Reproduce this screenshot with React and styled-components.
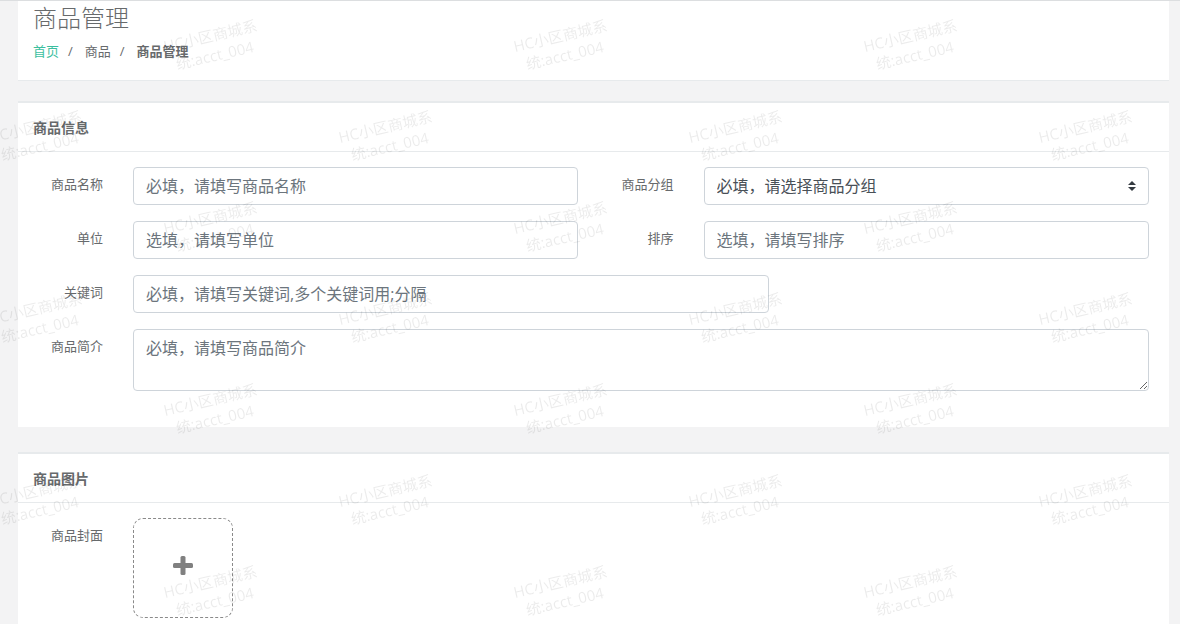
import React from 'react'
import styled, { createGlobalStyle } from 'styled-components'

const GlobalStyle = createGlobalStyle`
  html, body {
    margin: 0;
    padding: 0;
    overflow: hidden;
  }
  body {
    background: #f3f3f4;
    font-family: "Open Sans", "Noto Sans CJK SC", sans-serif;
    font-size: 13px;
    color: #676a6c;
  }
  * { box-sizing: border-box; }
`

const Page = styled.div`
  height: 100vh;
  overflow: hidden;
  border-top: 1px solid #dcdee0;
  padding: 0 11px 0 18px;
  position: relative;
`

const PageHeader = styled.div`
  background: #fff;
  height: 80px;
  border-bottom: 1px solid #e7eaec;
  padding: 4px 15px 0;
  h2 {
    margin: 0;
    font-size: 24px;
    font-weight: 300;
    line-height: 26px;
    color: #676a6c;
  }
`

const Breadcrumb = styled.ol`
  display: flex;
  list-style: none;
  margin: 10px 0 0;
  padding: 0;
  line-height: 20px;
  font-size: 13px;
  a {
    color: #3cbf9f;
    text-decoration: none;
  }
  strong {
    font-weight: 700;
    color: #676a6c;
  }
`

const Sep = styled.span`
  margin: 0 12px 0 9px;
  color: #676a6c;
`

const Ibox = styled.div`
  background: #fff;
  margin-top: ${p => p.$first ? '20px' : '25px'};
`

const IboxTitle = styled.div`
  border-top: 2px solid #e7eaec;
  border-bottom: 1px solid #e7eaec;
  padding: 15px 15px 13px;
  h5 {
    margin: 0;
    font-size: 14px;
    font-weight: 700;
    line-height: 20px;
    color: #676a6c;
  }
`

const IboxContent = styled.div`
  padding: 15px 20px 20px;
`

const Row = styled.div`
  display: flex;
  margin: 0 -15px 16px;
`

const Col = styled.div`
  flex: 0 0 ${p => (p.$span / 12) * 100}%;
  max-width: ${p => (p.$span / 12) * 100}%;
  padding: 0 15px;
  position: relative;
`

const Label = styled.label`
  display: block;
  text-align: right;
  padding-top: 7px;
  line-height: 20px;
  font-size: 13px;
  color: #676a6c;
  white-space: nowrap;
`

const fieldBase = `
  display: block;
  width: 100%;
  padding: 6px 12px;
  font-family: "Open Sans", "Noto Sans CJK SC", sans-serif;
  font-size: 16px;
  line-height: 24px;
  color: #495057;
  background: #fff;
  border: 1px solid #ced4da;
  border-radius: 4px;
  outline: none;
  &::placeholder { color: #6c757d; opacity: 1; }
`

const Input = styled.input`
  ${fieldBase}
  height: 38px;
`

const TextArea = styled.textarea`
  ${fieldBase}
  height: 62px;
  resize: vertical;
`

const Select = styled.select`
  ${fieldBase}
  height: 38px;
  appearance: none;
  padding-right: 32px;
`

const SelectArrow = styled.svg`
  position: absolute;
  right: 28px;
  top: 14px;
  width: 8px;
  height: 10px;
  pointer-events: none;
`

const Upload = styled.div`
  width: 100px;
  height: 100px;
  border: 1px dashed #8a8a8a;
  border-radius: 10px;
  display: flex;
  align-items: center;
  justify-content: center;
  cursor: pointer;
  svg { margin-bottom: 5px; }
`

const Watermarks = styled.div`
  position: fixed;
  inset: 0;
  pointer-events: none;
  z-index: 10;
  overflow: hidden;
`

const Mark = styled.div`
  position: absolute;
  width: max-content;
  text-align: center;
  font-size: 15px;
  line-height: 20px;
  color: rgba(0, 0, 0, 0.08);
  transform: rotate(-13deg);
  transform-origin: 0 16px;
  white-space: nowrap;
`

const marks = []
for (let r = 0; r < 7; r++) {
  const baseX = r % 2 === 0 ? 165 : -10
  const y = 52 + 91 * r
  for (let k = 0; k < 4; k++) {
    const x = baseX + 350 * k
    if (x < 1180) marks.push({ x, y })
  }
}

function Field({ label, span, children }) {
  return (
    <>
      <Col $span={1}><Label>{label}</Label></Col>
      <Col $span={span}>{children}</Col>
    </>
  )
}

export default function App() {
  return (
    <>
      <GlobalStyle />
      <Page>
        <PageHeader>
          <h2>商品管理</h2>
          <Breadcrumb>
            <li><a href="#">首页</a></li>
            <li><Sep>/</Sep>商品</li>
            <li><Sep>/</Sep><strong>商品管理</strong></li>
          </Breadcrumb>
        </PageHeader>

        <Ibox $first>
          <IboxTitle><h5>商品信息</h5></IboxTitle>
          <IboxContent>
            <Row>
              <Field label="商品名称" span={5}>
                <Input placeholder="必填，请填写商品名称" />
              </Field>
              <Field label="商品分组" span={5}>
                <Select defaultValue="">
                  <option value="">必填，请选择商品分组</option>
                </Select>
                <SelectArrow viewBox="0 0 4 5">
                  <path fill="#343a40" d="M2 0L0 2h4zm0 5L0 3h4z" />
                </SelectArrow>
              </Field>
            </Row>
            <Row>
              <Field label="单位" span={5}>
                <Input placeholder="选填，请填写单位" />
              </Field>
              <Field label="排序" span={5}>
                <Input placeholder="选填，请填写排序" />
              </Field>
            </Row>
            <Row>
              <Field label="关键词" span={7}>
                <Input placeholder="必填，请填写关键词,多个关键词用;分隔" />
              </Field>
            </Row>
            <Row>
              <Field label="商品简介" span={11}>
                <TextArea placeholder="必填，请填写商品简介" />
              </Field>
            </Row>
          </IboxContent>
        </Ibox>

        <Ibox>
          <IboxTitle><h5>商品图片</h5></IboxTitle>
          <IboxContent>
            <Row>
              <Field label="商品封面" span={11}>
                <Upload>
                  <svg width="20" height="19" viewBox="0 0 20 19">
                    <rect x="7.5" y="0" width="5" height="19" rx="1.5" fill="#808080" />
                    <rect x="0" y="7" width="20" height="5" rx="1.5" fill="#808080" />
                  </svg>
                </Upload>
              </Field>
            </Row>
          </IboxContent>
        </Ibox>
      </Page>

      <Watermarks>
        {marks.map((m, i) => (
          <Mark key={i} style={{ left: m.x, top: m.y - 16 }}>
            HC小区商城系<br />统:acct_004
          </Mark>
        ))}
      </Watermarks>
    </>
  )
}
